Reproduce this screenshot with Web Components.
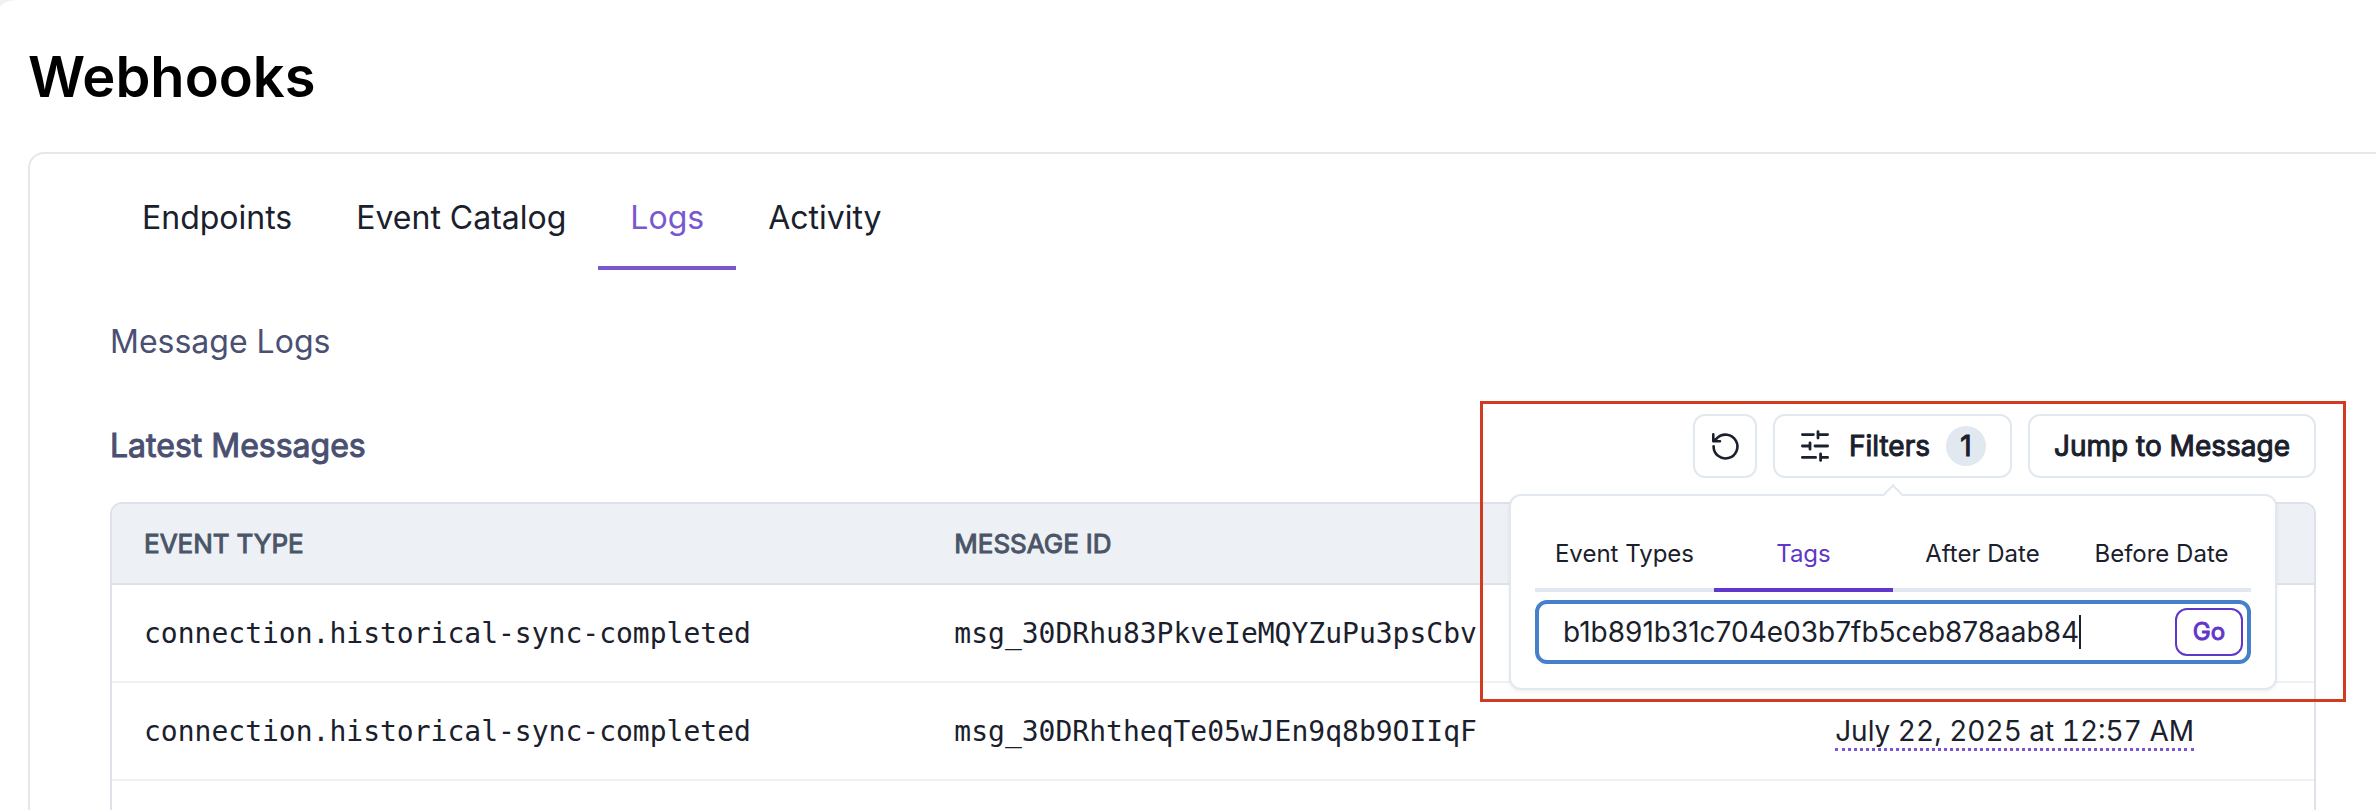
<!DOCTYPE html>
<html lang="en">
<head>
<meta charset="utf-8">
<title>Webhooks</title>
<style>
  html, body { margin: 0; height: 100%; }
  body { background: #f1f1ed; font-family: Inter, "Liberation Sans", sans-serif; color: #1a202c; overflow: hidden; }
</style>
</head>
<body>
<webhooks-page>
  <h1 slot="title">Webhooks</h1>
  <nav-tabs slot="tabs" items="Endpoints,Event Catalog,Logs,Activity" current="Logs"></nav-tabs>
  <span slot="crumb">Message Logs</span>
  <span slot="heading">Latest Messages</span>
  <log-toolbar slot="toolbar"></log-toolbar>
  <message-table slot="table"></message-table>
</webhooks-page>

<script>
const define = (name, html, setup) => {
  const tpl = document.createElement('template');
  tpl.innerHTML = html;
  customElements.define(name, class extends HTMLElement {
    constructor() {
      super();
      this.attachShadow({ mode: 'open' }).append(tpl.content.cloneNode(true));
    }
    connectedCallback() { if (setup) setup(this, this.shadowRoot); }
  });
};

define('webhooks-page', `
<style>
  :host { display: flex; flex-direction: column; box-sizing: border-box; height: 100vh; overflow: hidden;
    padding: 40px 0 0 28px; background: #fff; border-top-left-radius: 20px 8px; }
  ::slotted(h1) { margin: 0 0 38px; font-size: 56px; line-height: 74px; font-weight: 600; color: #000; }
  .card { flex: 1; display: flex; flex-direction: column; min-height: 0; border: 2px solid #e5e7eb; border-width: 2px 0 0 2px;
    border-top-left-radius: 16px; padding: 0 60px 0 80px; }
  .crumb { margin-top: 48px; font-size: 32px; line-height: 48px; color: #4a5072; }
  .head { display: flex; align-items: center; justify-content: space-between; margin: 48px 0 24px; }
  h2 { margin: 0; font-size: 32px; line-height: 48px; font-weight: 400; -webkit-text-stroke: 1px; color: #4a5072; }
  ::slotted(message-table) { flex: 1; min-height: 0; }
</style>
<slot name="title"></slot>
<main class="card">
  <slot name="tabs"></slot>
  <div class="crumb"><slot name="crumb"></slot></div>
  <div class="head"><h2><slot name="heading"></slot></h2><slot name="toolbar"></slot></div>
  <slot name="table"></slot>
</main>`);

define('nav-tabs', `
<style>
  :host { display: block; }
  nav { display: flex; }
  a { padding: 40px 32px 24px; font-size: 32px; line-height: 48px; color: #1a202c; text-decoration: none;
    border-bottom: 4px solid transparent; }
  a[aria-current] { color: #7a57d1; border-color: #7a57d1; }
</style>
<nav></nav>`, (host, root) => {
  root.querySelector('nav').replaceChildren(...host.getAttribute('items').split(',').map(text => {
    const a = document.createElement('a');
    a.href = '#' + text.toLowerCase().replace(' ', '-');
    a.textContent = text;
    if (text === host.getAttribute('current')) a.setAttribute('aria-current', 'page');
    return a;
  }));
});

define('tool-button', `
<style>
  :host { display: block; }
  button { display: flex; align-items: center; justify-content: center; box-sizing: border-box; height: 64px; min-width: 64px;
    padding: 0 24px; border: 2px solid #e2e8f0; border-radius: 12px; background: #fff; color: #1a202c;
    font: 400 28px/40px Inter, "Liberation Sans", sans-serif; -webkit-text-stroke: 1px; white-space: nowrap; }
  :host([icon-only]) button { padding: 0; }
</style>
<button type="button"><slot></slot></button>`, (host, root) => {
  const label = host.getAttribute('label');
  if (label) root.querySelector('button').setAttribute('aria-label', label);
});

define('log-toolbar', `
<style>
  :host { display: flex; gap: 16px; position: relative; }
  svg { display: block; fill: none; stroke: #1a202c; stroke-linecap: round; stroke-linejoin: round; }
  .tune { margin-right: 18px; }
  .count { width: 40px; height: 40px; margin-left: 16px; border-radius: 50%; background: #e2e8f0; text-align: center; }
  .filters { position: relative; }
  filter-popover { position: absolute; z-index: 2; top: 80px; right: -265px; }
  .callout { position: absolute; z-index: 3; box-sizing: border-box; width: 866px; height: 301px; top: -13px; right: -30px;
    border: 3px solid #d23a22; pointer-events: none; }
</style>
<tool-button icon-only label="Refresh">
  <svg width="32" height="32" viewBox="0 0 32 32" stroke-width="2.6"><path d="M4.6 16.2A11.9 11.9 0 1 0 8 8.2L4.6 11.2M4.3 4.4V11.2H11"/></svg>
</tool-button>
<div class="filters">
  <tool-button>
    <svg class="tune" width="32" height="32" viewBox="0 0 32 32" stroke-width="2.8"><path d="M3.4 4.6H14.4M19 1.6V8M20 4.6H28.6M3.4 16H11M11 12.8V19.2M16 16H28.6M3.4 27.4H16.6M21.6 24V30.4M22.4 27.4H28.6"/></svg>
    Filters <span class="count">1</span>
  </tool-button>
  <filter-popover></filter-popover>
</div>
<tool-button>Jump to Message</tool-button>
<div class="callout"></div>`);

define('filter-popover', `
<style>
  :host { display: block; box-sizing: border-box; width: 768px; padding: 24px; border: 2px solid #e2e8f0; border-radius: 12px;
    background: #fff; box-shadow: 0 2px 4px rgba(0,0,0,.06); -webkit-text-stroke: 0; }
  .arrow { position: absolute; top: -9px; left: calc(50% - 7px); width: 14px; height: 14px; box-sizing: border-box;
    border: solid #e2e8f0; border-width: 2px 0 0 2px; background: #fff; transform: rotate(45deg); }
  .tabs { display: grid; grid-template-columns: repeat(4, 1fr); }
  .tabs button { height: 72px; padding: 0; border: 0; border-bottom: 4px solid #e2e8f0; background: none; color: #1a202c;
    font: 400 24px/36px Inter, "Liberation Sans", sans-serif; }
  .tabs button[aria-selected=true] { color: #5f37c9; border-color: #5f37c9; }
  form { display: flex; align-items: center; box-sizing: border-box; height: 64px; margin-top: 8px; padding: 0 4px 0 24px;
    border: 4px solid #4680c8; border-radius: 12px; }
  input { field-sizing: content; min-width: 0; padding: 0; border: 0; outline: 0; background: none; color: #1a202c;
    font: 400 28px/40px Inter, "Liberation Sans", sans-serif; }
  .caret { width: 2px; height: 34px; background: #1a202c; }
  .go { width: 68px; height: 48px; margin-left: auto; padding: 0; border: 2px solid #5f37c9; border-radius: 12px; background: #fff;
    color: #5f37c9; font: 400 24px/36px Inter, "Liberation Sans", sans-serif; -webkit-text-stroke: 1px; }
</style>
<div class="arrow"></div>
<div class="tabs" role="tablist">
  <button role="tab" type="button">Event Types</button>
  <button role="tab" type="button" aria-selected="true">Tags</button>
  <button role="tab" type="button">After Date</button>
  <button role="tab" type="button">Before Date</button>
</div>
<form>
  <input type="text" aria-label="Tag" value="b1b891b31c704e03b7fb5ceb878aab84"><span class="caret"></span>
  <button class="go" type="button">Go</button>
</form>`);

define('message-table', `
<style>
  :host { display: block; box-sizing: border-box; border: 2px solid #e0e0ea; border-bottom: 0; border-radius: 12px 12px 0 0; overflow: hidden; }
  table { width: 100%; table-layout: fixed; border-collapse: separate; border-spacing: 0; font-variant-numeric: tabular-nums; }
  th, td { box-sizing: border-box; padding: 0 0 0 32px; text-align: left; white-space: nowrap; }
  th { height: 81px; background: #edf0f5; border-bottom: 2px solid #e0e0ea; color: #4a5568; font-size: 26px; line-height: 32px; font-weight: 400; -webkit-text-stroke: 1px; }
  td { height: 98px; border-bottom: 2px solid #edf2f7; font-size: 28px; line-height: 40px; }
  code { font-family: "DejaVu Sans Mono", monospace; font-size: 28px; }
  time { border-bottom: 3px dotted #7a57d1; display: inline-block; line-height: 34px; }
  col.type { width: 36.8%; } col.id { width: 40%; }
</style>
<table>
  <colgroup><col class="type"><col class="id"><col></colgroup>
  <thead><tr><th scope="col">EVENT TYPE</th><th scope="col">MESSAGE ID</th><th></th></tr></thead>
  <tbody>
    <tr><td><code>connection.historical-sync-completed</code></td><td><code>msg_30DRhu83PkveIeMQYZuPu3psCbv</code></td><td></td></tr>
    <tr><td><code>connection.historical-sync-completed</code></td><td><code>msg_30DRhtheqTe05wJEn9q8b9OIIqF</code></td><td><time datetime="2025-07-22T00:57">July 22, 2025 at 12:57 AM</time></td></tr>
  </tbody>
</table>`);
</script>
</body>
</html>
